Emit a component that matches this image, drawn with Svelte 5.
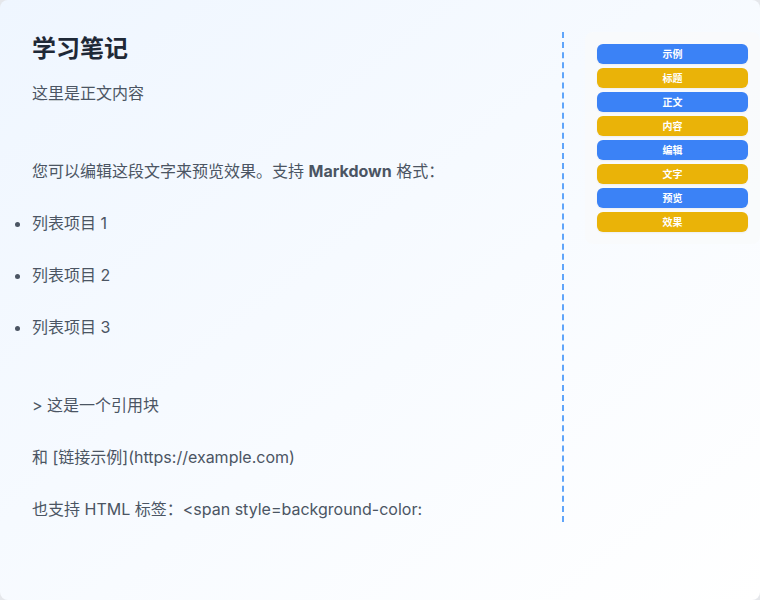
<script>
  const items = [1, 2, 3];
  const tags = ['示例', '标题', '正文', '内容', '编辑', '文字', '预览', '效果'];
</script>

<main>
  <article>
    <h1>学习笔记</h1>
    <p>这里是正文内容</p>
    <p class="section">您可以编辑这段文字来预览效果。支持 <strong>Markdown</strong> 格式：</p>
    <ul>
      {#each items as n}
        <li>列表项目 {n}</li>
      {/each}
    </ul>
    <p class="section">&gt; 这是一个引用块</p>
    <p>和 [链接示例](https://example.com)</p>
    <p>也支持 HTML 标签：&lt;span style=background-color:</p>
  </article>
  <aside>
    <div class="tags">
      {#each tags as tag}
        <span class="tag">{tag}</span>
      {/each}
    </div>
  </aside>
</main>

<style>
  :global(body) {
    margin: 0;
    background: #e5e7eb;
  }
  main {
    display: flex;
    box-sizing: border-box;
    min-height: 100vh;
    padding: 32px 0 78px 32px;
    border-radius: 8px;
    background: linear-gradient(to bottom right, #eff6ff, #ffffff);
    font-family: Inter, "Noto Sans CJK SC", sans-serif;
    color: #4b5563;
  }
  article {
    flex: 1;
    font-size: 16px;
    line-height: 26px;
  }
  h1 {
    margin: 0 0 14px;
    font-size: 24px;
    line-height: 34px;
    font-weight: 700;
    color: #1f2937;
  }
  p {
    margin: 0 0 26px;
  }
  .section {
    margin-top: 52px;
  }
  p:last-child {
    margin-bottom: 0;
  }
  ul {
    margin: 0;
    padding: 0;
  }
  li {
    margin-bottom: 26px;
  }
  aside {
    width: 198px;
    border-left: 2px dashed #60a5fa;
    box-sizing: border-box;
  }
  .tags {
    display: flex;
    flex-direction: column;
    gap: 4px;
    margin-left: 21px;
    padding: 12px;
    border-radius: 8px;
    background: rgba(249, 250, 251, 0.8);
  }
  .tag {
    border-radius: 6px;
    background: #3b82f6;
    box-shadow: 0 1px 2px rgba(0, 0, 0, 0.05);
    color: #fff;
    font-size: 10px;
    line-height: 20px;
    font-weight: 700;
    text-align: center;
  }
  .tag:nth-child(even) {
    background: #eab308;
  }
</style>
